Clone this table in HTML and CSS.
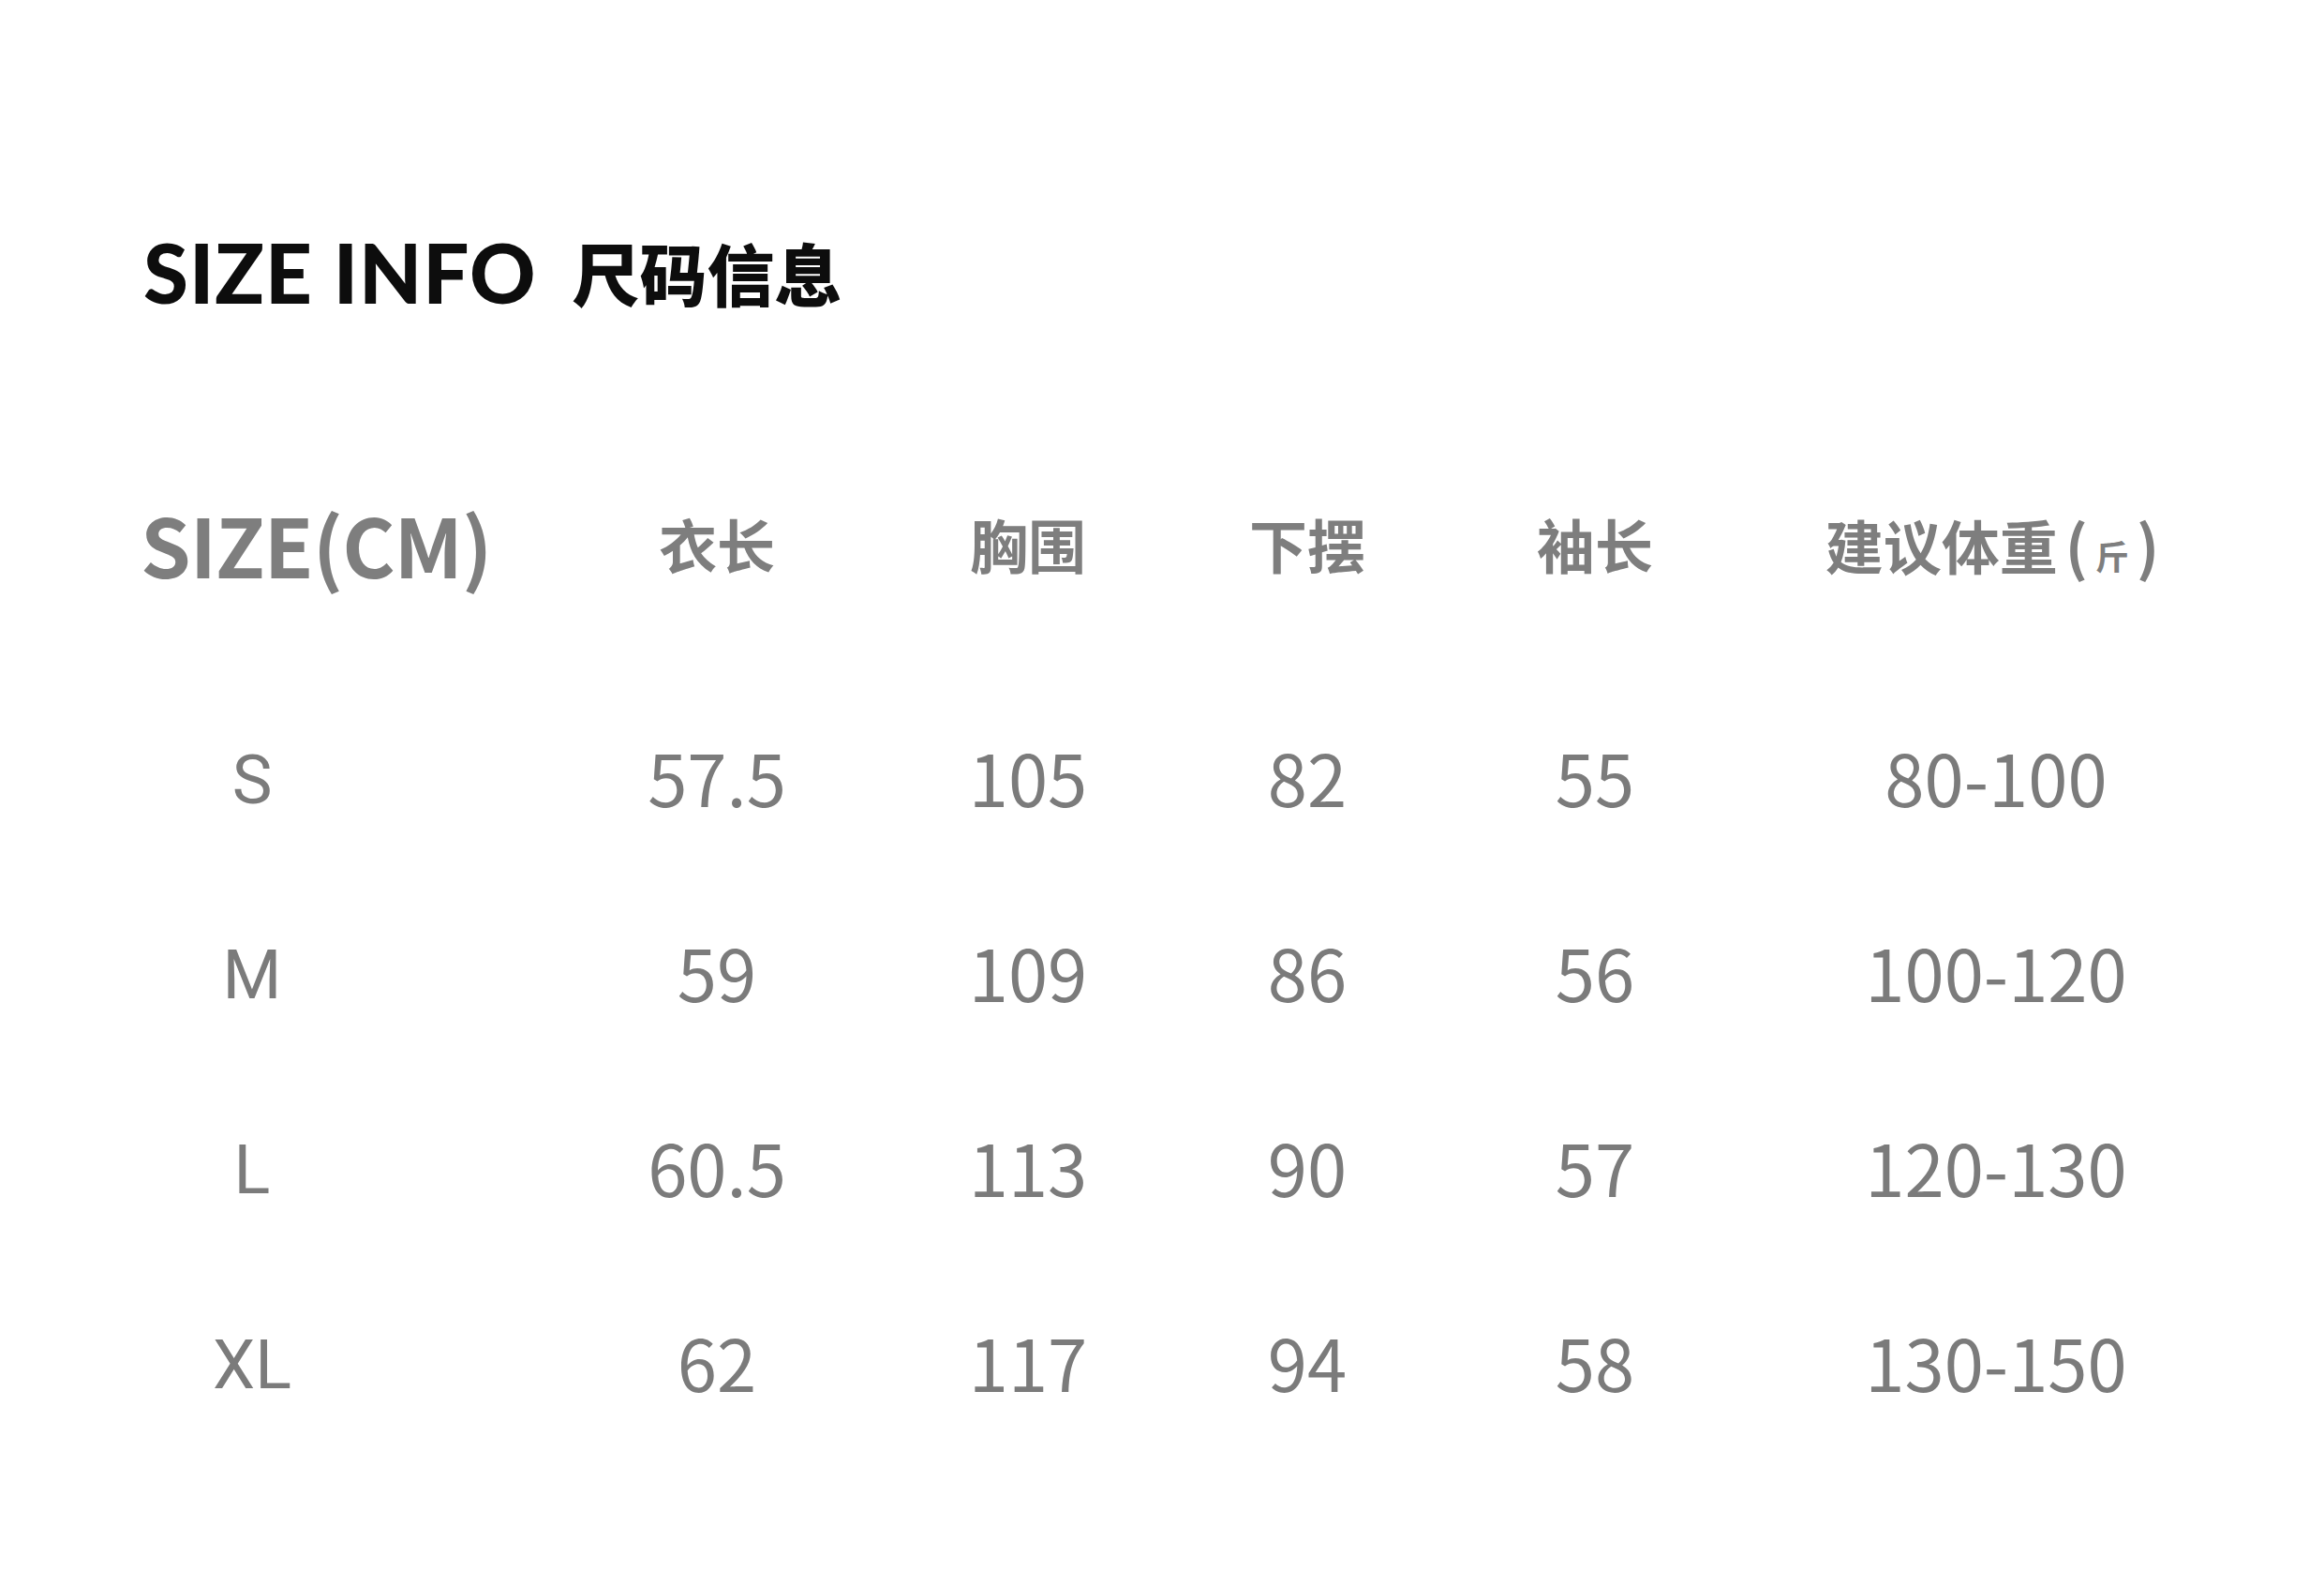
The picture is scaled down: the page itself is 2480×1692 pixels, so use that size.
FILE: index.html
```html
<!DOCTYPE html>
<html lang="zh-CN">
<head>
<meta charset="utf-8">
<title>SIZE INFO 尺码信息</title>
<link rel="stylesheet" href="styles.css">
</head>
<body>
<div class="page">
  <h1 class="title"><span class="title-en">SIZE INFO</span><span class="title-cn">尺码信息</span></h1>
  <div class="table">
    <div class="row head">
      <div class="cell first"><span class="head-en">SIZE(CM)</span></div>
      <div class="cell">衣长</div>
      <div class="cell">胸围</div>
      <div class="cell">下摆</div>
      <div class="cell">袖长</div>
      <div class="cell">建议体重<span class="paren">(</span><span class="jin">斤</span><span class="paren">)</span></div>
    </div>
    <div class="row">
      <div class="cell first"><span class="label">S</span></div>
      <div class="cell">57.5</div>
      <div class="cell">105</div>
      <div class="cell">82</div>
      <div class="cell">55</div>
      <div class="cell">80-100</div>
    </div>
    <div class="row">
      <div class="cell first"><span class="label">M</span></div>
      <div class="cell">59</div>
      <div class="cell">109</div>
      <div class="cell">86</div>
      <div class="cell">56</div>
      <div class="cell">100-120</div>
    </div>
    <div class="row">
      <div class="cell first"><span class="label">L</span></div>
      <div class="cell">60.5</div>
      <div class="cell">113</div>
      <div class="cell">90</div>
      <div class="cell">57</div>
      <div class="cell">120-130</div>
    </div>
    <div class="row">
      <div class="cell first"><span class="label">XL</span></div>
      <div class="cell">62</div>
      <div class="cell">117</div>
      <div class="cell">94</div>
      <div class="cell">58</div>
      <div class="cell">130-150</div>
    </div>
  </div>
</div>
</body>
</html>
```

FILE: styles.css
```css
html, body {
  margin: 0;
  padding: 0;
  background: #ffffff;
}

.page {
  width: 2480px;
  height: 1692px;
  box-sizing: border-box;
  padding: 240px 0 0 150px;
  font-family: "Noto Sans CJK SC", "Noto Sans", sans-serif;
}

.title {
  margin: 0;
  height: 100px;
  display: flex;
  align-items: center;
  gap: 38px;
  color: #0d0d0d;
  font-weight: 900;
  line-height: 1;
}

.title-en {
  font-family: Lato, "Liberation Sans", sans-serif;
  font-size: 87px;
  font-weight: 900;
  letter-spacing: 1px;
  padding-left: 3px;
}

.title-cn {
  font-family: "Noto Sans CJK SC", sans-serif;
  font-size: 72px;
  font-weight: 900;
}

.table {
  margin-top: 96px;
  display: flex;
  flex-direction: column;
}

.row {
  display: grid;
  grid-template-columns: 449px 332px 332px 264px 350px 506px;
  height: 208px;
  align-items: center;
  color: #7b7b7b;
  font-size: 76px;
  font-weight: 400;
  line-height: 1;
}

.row.head {
  height: 288px;
  font-size: 62px;
  font-weight: 700;
  color: #7e7e7e;
}

.cell {
  text-align: center;
  white-space: nowrap;
}

.cell.first {
  text-align: left;
}

.head-en {
  font-size: 86px;
  font-weight: 700;
  letter-spacing: -1px;
}

.label {
  display: inline-block;
  width: 238px;
  text-align: center;
  font-family: Roboto, "Liberation Sans", sans-serif;
  font-size: 72px;
  position: relative;
  top: -1px;
}

.paren {
  font-weight: 700;
  font-size: 64px;
  margin: 0 8px;
}

.jin {
  font-size: 36px;
  font-weight: 700;
}
```
